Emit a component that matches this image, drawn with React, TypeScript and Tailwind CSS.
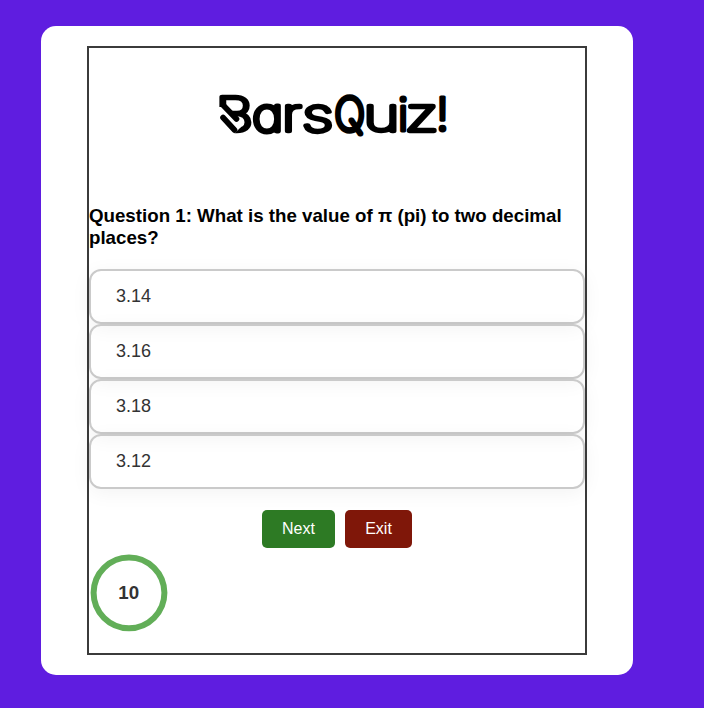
const options = ["3.14", "3.16", "3.18", "3.12"];

const wordmark = [
  { char: "B", x: -1.6, stretch: 1.28, weight: 100, stroke: 5 },
  { char: "a", x: 35.2, stretch: 1.16, weight: 100, stroke: 5.2 },
  { char: "r", x: 65, stretch: 1.3, weight: 100, stroke: 5.2 },
  { char: "s", x: 85, stretch: 1.38, weight: 100, stroke: 5.2 },
  { char: "Q", x: 117.5, stretch: 0.88, weight: 100, stroke: 5.2 },
  { char: "u", x: 146.4, stretch: 1.34, weight: 100, stroke: 5.2 },
  { char: "i", x: 180.7, stretch: 1, weight: 300, stroke: 3 },
  { char: "z", x: 187.8, stretch: 1.41, weight: 100, stroke: 5.2 },
  { char: "!", x: 219, stretch: 1, weight: 300, stroke: 3 },
];

function Logo() {
  return (
    <svg width="256" height="60" viewBox="-8 0 256 60" role="img" aria-label="BarsQuiz!" className="mx-auto block">
      <g
        fontSize="46"
        fill="#000"
        stroke="#000"
        strokeLinejoin="round"
        strokeLinecap="round"
        className="font-['Inter',sans-serif] [font-feature-settings:'cv11']"
      >
        {wordmark.map(({ char, x, stretch, weight, stroke }) => (
          <text
            key={char}
            transform={`translate(${x} 45.5) scale(${stretch} 1)`}
            fontWeight={weight}
            strokeWidth={stroke}
            vectorEffect="non-scaling-stroke"
          >
            {char}
          </text>
        ))}
      </g>
      {/* Diagonal pencil accent across the initial */}
      <path d="M0 22 L9 22 L24 36 L24 42 L16 50 L0 50Z" fill="#fff" />
      <path d="M6 20 L19.5 34 M6 32.5 L17.5 45" stroke="#000" strokeWidth="5.6" strokeLinecap="round" />
    </svg>
  );
}

export default function App() {
  return (
    <div className="h-[708px] w-[704px] overflow-hidden bg-[#5f1de0] pt-[26px] pl-[41px] font-['Liberation_Sans',Arial,sans-serif]">
      <main className="h-[649px] w-[592px] rounded-[15px] bg-white px-[46px] py-5">
        <section className="h-[609px] w-[500px] border-2 border-[#3b3b3b] pt-[37px]">
          <Logo />
          <h1 className="mt-[60px] text-[18.72px] leading-[22px] font-bold text-black">
            Question 1: What is the value of π (pi) to two decimal places?
          </h1>
          <ul className="mt-[20px]">
            {options.map((option) => (
              <li
                key={option}
                className="flex h-[55px] items-center rounded-[12px] border-2 border-[#cacaca] pl-[25px] text-[18px] text-[#333] shadow-[0_4px_20px_rgba(0,0,0,0.05)]"
              >
                {option}
              </li>
            ))}
          </ul>
          <div className="mt-[21px] flex justify-center gap-[10px] text-base text-white">
            <button className="h-[38px] w-[73px] rounded-[5px] bg-[#2d7a24]">Next</button>
            <button className="h-[38px] w-[67px] rounded-[5px] bg-[#7f1709]">Exit</button>
          </div>
          <svg width="80" height="80" viewBox="0 0 80 80" className="mt-[5px] block">
            <circle cx="40" cy="39.8" r="35.4" fill="none" stroke="#62ae58" strokeWidth="6" />
            <text x="39.7" y="45.5" textAnchor="middle" fontSize="18.72" fontWeight="700" fill="#333">
              10
            </text>
          </svg>
        </section>
      </main>
    </div>
  );
}
